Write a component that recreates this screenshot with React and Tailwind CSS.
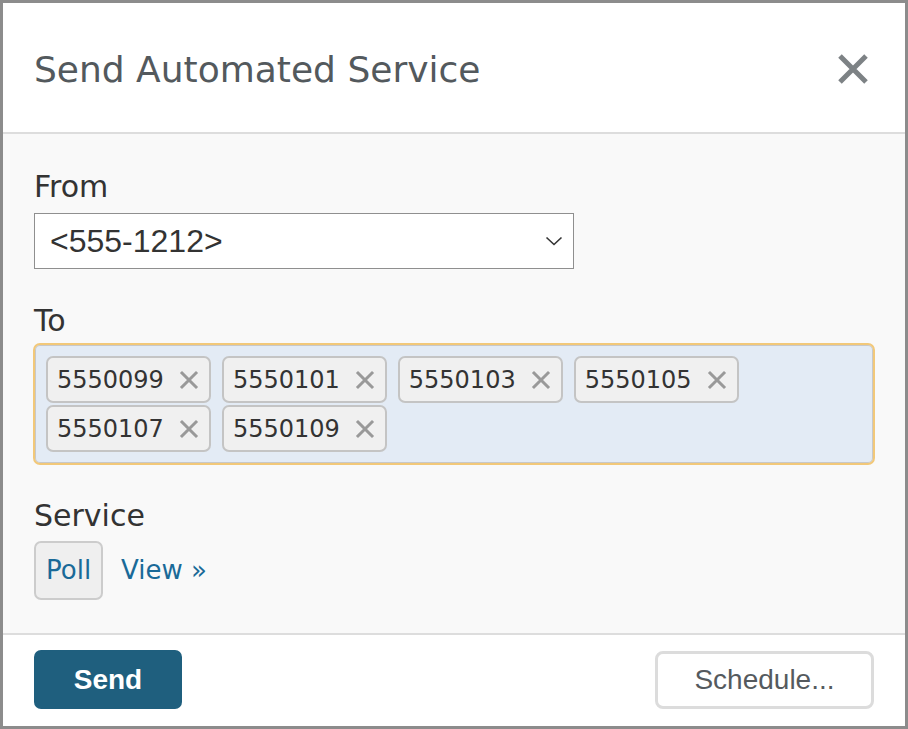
import React from "react";

const numbers = ["5550099", "5550101", "5550103", "5550105", "5550107", "5550109"];

const Chip = ({ value }) => (
  <div className="flex h-[47px] items-center rounded-[7px] border-2 border-[#c4c4c4] bg-[#f0f0f0] pl-[9px] pr-[10px] text-[24px] text-[#333]">
    <span>{value}</span>
    <svg className="ml-[15px] h-[20px] w-[20px]" viewBox="0 0 20 20">
      <path d="M3 3 L17 17 M17 3 L3 17" stroke="#999" strokeWidth="3" strokeLinecap="square" />
    </svg>
  </div>
);

export default function App() {
  return (
    <div
      className="flex h-[729px] w-[908px] flex-col border-[3px] border-[#8c8c8c] bg-white"
      style={{ fontFamily: '"DejaVu Sans", Verdana, sans-serif' }}
    >
      {/* header */}
      <div className="flex h-[131px] shrink-0 items-center justify-between border-b-2 border-[#dddddd] pl-[31px] pr-[36px] pt-[4px]">
        <h1 className="text-[36px] font-normal text-[#53595d]">Send Automated Service</h1>
        <svg className="mb-[2px] h-[32px] w-[32px]" viewBox="0 0 32 32">
          <path d="M3 3 L29 29 M29 3 L3 29" stroke="#7d8285" strokeWidth="5" />
        </svg>
      </div>

      {/* body */}
      <div className="flex-1 bg-[#f9f9f9] px-[30px] pt-[37px]">
        <div className="pl-[1px] text-[30px] leading-[32px] text-[#333]">From</div>
        <div className="mt-[10px] ml-[1px] flex h-[56px] w-[540px] items-center justify-between border border-[#8f8f8f] bg-white pl-[15px] pr-[10px]">
          <span className="text-[32px] text-[#333]" style={{ fontFamily: '"Liberation Sans", Arial, sans-serif' }}>
            &lt;555-1212&gt;
          </span>
          <svg className="h-[12px] w-[18px]" viewBox="0 0 18 12">
            <path d="M1.5 2.5 L9 9.5 L16.5 2.5" fill="none" stroke="#333" strokeWidth="1.6" />
          </svg>
        </div>

        <div className="mt-[36px] pl-[1px] text-[30px] leading-[32px] text-[#333]">To</div>
        <div className="mt-[6px] flex h-[122px] flex-wrap content-start gap-x-[11px] gap-y-[2px] rounded-[7px] border-2 border-[#f2c879] bg-[#e3ebf5] px-[11px] pt-[11px] shadow-[inset_0_0_0_1px_#c8c8c8]">
          {numbers.map((n) => (
            <Chip key={n} value={n} />
          ))}
        </div>

        <div className="mt-[35px] pl-[1px] text-[30px] leading-[32px] text-[#333]">Service</div>
        <div className="mt-[9px] ml-[1px] flex items-center gap-[18px]">
          <div className="flex h-[59px] items-center rounded-[7px] border-2 border-[#cccccc] bg-[#efefef] px-[10px] text-[26px] text-[#1a6a98]">
            Poll
          </div>
          <a className="text-[26px] text-[#1a6a98]">View »</a>
        </div>
      </div>

      {/* footer */}
      <div
        className="flex h-[93px] shrink-0 items-start justify-between border-t-2 border-[#dddddd] bg-white pl-[31px] pr-[31px] pt-[15px]"
        style={{ fontFamily: '"Liberation Sans", Arial, sans-serif' }}
      >
        <button className="flex h-[59px] w-[148px] items-center justify-center rounded-[7px] bg-[#1f5f7e] text-[28px] font-bold text-white">
          Send
        </button>
        <button className="mt-[1px] flex h-[58px] w-[219px] items-center justify-center rounded-[8px] border-[3px] border-[#dcdcdc] bg-white text-[28px] text-[#555a5e]">
          Schedule...
        </button>
      </div>
    </div>
  );
}
